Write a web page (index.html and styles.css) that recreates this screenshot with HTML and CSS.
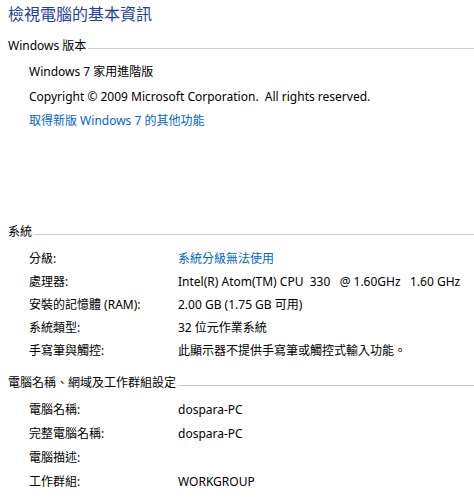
FILE: index.html
```html
<!DOCTYPE html>
<html lang="zh-Hant">
<head>
<meta charset="utf-8">
<link rel="stylesheet" href="styles.css">
</head>
<body>
<h1 class="title">檢視電腦的基本資訊</h1>

<section class="group group-edition">
  <div class="group-head"><span class="group-name">Windows 版本</span><span class="group-rule"></span></div>
  <div class="list">
    <div class="line">Windows 7 家用進階版</div>
    <div class="line">Copyright © 2009 Microsoft Corporation.&nbsp; All rights reserved.</div>
    <div class="line link">取得新版 Windows 7 的其他功能</div>
  </div>
</section>

<section class="group group-system">
  <div class="group-head"><span class="group-name">系統</span><span class="group-rule"></span></div>
  <div class="table">
    <div class="row"><span class="label">分級:</span><span class="value link">系統分級無法使用</span></div>
    <div class="row"><span class="label">處理器:</span><span class="value">Intel(R) Atom(TM) CPU&nbsp; 330&nbsp;&nbsp; @ 1.60GHz&nbsp;&nbsp; 1.60 GHz</span></div>
    <div class="row"><span class="label">安裝的記憶體 (RAM):</span><span class="value">2.00 GB (1.75 GB 可用)</span></div>
    <div class="row"><span class="label">系統類型:</span><span class="value">32 位元作業系統</span></div>
    <div class="row"><span class="label">手寫筆與觸控:</span><span class="value">此顯示器不提供手寫筆或觸控式輸入功能。</span></div>
  </div>
</section>

<section class="group group-name-sec">
  <div class="group-head"><span class="group-name">電腦名稱、網域及工作群組設定</span><span class="group-rule"></span></div>
  <div class="table">
    <div class="row"><span class="label">電腦名稱:</span><span class="value">dospara-PC</span></div>
    <div class="row"><span class="label">完整電腦名稱:</span><span class="value">dospara-PC</span></div>
    <div class="row"><span class="label">電腦描述:</span><span class="value"></span></div>
    <div class="row"><span class="label">工作群組:</span><span class="value">WORKGROUP</span></div>
  </div>
</section>
</body>
</html>
```

FILE: styles.css
```css
html, body {
  margin: 0;
  padding: 0;
  background: #ffffff;
}

body {
  padding-left: 8px;
  font-family: "Noto Sans", "Noto Sans CJK TC", sans-serif;
  font-size: 12px;
  color: #000000;
}

.title {
  margin: 4px 0 0 0;
  font-size: 16px;
  line-height: 20px;
  font-weight: normal;
  color: #1e3f9a;
}

.group-head {
  display: flex;
  align-items: center;
  height: 20px;
}

.group-name {
  white-space: nowrap;
  line-height: 20px;
}

.group-rule {
  flex: 1;
  height: 1px;
  background: #cccccc;
  margin-left: 2px;
  margin-top: 4px;
}

.group-edition {
  margin-top: 12px;
}

.group-system {
  margin-top: 88.5px;
}

.group-name-sec {
  margin-top: 11px;
}

.list,
.table {
  padding-left: 21px;
  margin-top: 4px;
}

.line {
  line-height: 24.5px;
  white-space: nowrap;
}

.group-system .table {
  margin-top: 5px;
}

.group-system .row {
  height: 23px;
}

.group-name-sec .table {
  margin-top: 5px;
}

.row {
  display: grid;
  grid-template-columns: 149px 1fr;
  height: 24px;
  line-height: 24px;
  white-space: nowrap;
}

.link {
  color: #0066cc;
}
```
